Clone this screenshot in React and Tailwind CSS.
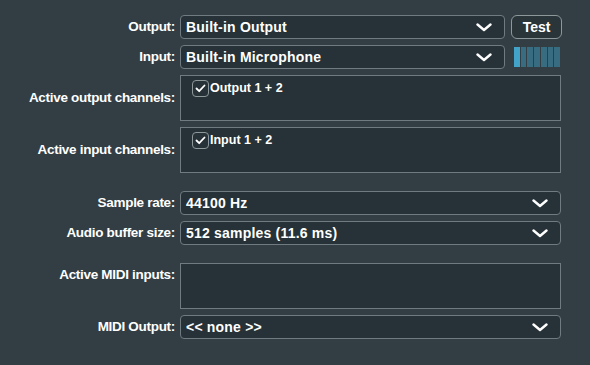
import React from "react";

const font = { fontFamily: '"Liberation Sans", Arial, sans-serif' };

function Chevron() {
  return (
    <svg width="16" height="9" viewBox="0 0 16 9" className="shrink-0 mt-[1px]">
      <path d="M1.5 1.5 L8 7 L14.5 1.5" fill="none" stroke="white" strokeWidth="2.4" strokeLinecap="round" strokeLinejoin="round" />
    </svg>
  );
}

function Label({ children }) {
  return (
    <div className="w-[180px] shrink-0 pr-[5px] text-right text-[13.5px] tracking-[-0.3px] font-bold text-white">{children}</div>
  );
}

function Combo({ text, w }) {
  return (
    <div className={`${w} h-[24px] flex items-center justify-between rounded-[4px] border border-[#6f7b80] bg-[#263238] pl-[5px] pr-[12px]`}>
      <span className="text-[14px] font-bold text-white tracking-[0.2px]">{text}</span>
      <Chevron />
    </div>
  );
}

function ListBox({ item }) {
  return (
    <div className="w-[381px] h-[46px] border border-[#6f7b80] bg-[#263238] pl-[11px] pt-[3px]">
      {item && (
        <div className="flex items-center gap-[1px]">
          <div className="w-[17px] h-[17px] rounded-[4px] border border-[#8e989b] flex items-center justify-center">
            <svg width="11" height="9" viewBox="0 0 11 9">
              <path d="M1.5 4.5 L4.2 7.2 L9.5 1.5" fill="none" stroke="white" strokeWidth="1.8" strokeLinecap="round" strokeLinejoin="round" />
            </svg>
          </div>
          <span className="text-[12.5px] font-bold text-white">{item}</span>
        </div>
      )}
    </div>
  );
}

function Meter() {
  const segs = [0, 1, 2, 3, 4, 5, 6];
  return (
    <div className="ml-[9px] w-[46px] h-[20px] flex gap-[1px] mt-[2px]">
      {segs.map((i) => (
        <div key={i} className={`flex-1 h-full ${i === 0 ? "bg-[#42a2c8]" : "bg-[#386c80]"}`} />
      ))}
    </div>
  );
}

export default function App() {
  return (
    <div style={font} className="w-[590px] h-[365px] bg-[#323e44] pt-[15px] flex flex-col">
      <div className="flex items-center h-[24px]">
        <Label>Output:</Label>
        <Combo text="Built-in Output" w="w-[325px]" />
        <div className="ml-[6px] w-[51px] h-[24px] rounded-[6px] border border-[#8e989b] bg-[#2a353a] flex items-center justify-center text-[14px] font-bold text-white">Test</div>
      </div>
      <div className="flex items-start h-[24px] mt-[6px]">
        <div className="self-center"><Label>Input:</Label></div>
        <Combo text="Built-in Microphone" w="w-[325px]" />
        <Meter />
      </div>
      <div className="flex items-center mt-[6px]">
        <Label>Active output channels:</Label>
        <ListBox item="Output 1 + 2" />
      </div>
      <div className="flex items-center mt-[6px]">
        <Label>Active input channels:</Label>
        <ListBox item="Input 1 + 2" />
      </div>
      <div className="flex items-center mt-[18px]">
        <Label>Sample rate:</Label>
        <Combo text="44100 Hz" w="w-[381px]" />
      </div>
      <div className="flex items-center mt-[6px]">
        <Label>Audio buffer size:</Label>
        <Combo text="512 samples (11.6 ms)" w="w-[381px]" />
      </div>
      <div className="flex items-start mt-[18px]">
        <div className="pt-[2px]"><Label>Active MIDI inputs:</Label></div>
        <ListBox />
      </div>
      <div className="flex items-center mt-[6px]">
        <Label>MIDI Output:</Label>
        <Combo text="<< none >>" w="w-[381px]" />
      </div>
    </div>
  );
}
